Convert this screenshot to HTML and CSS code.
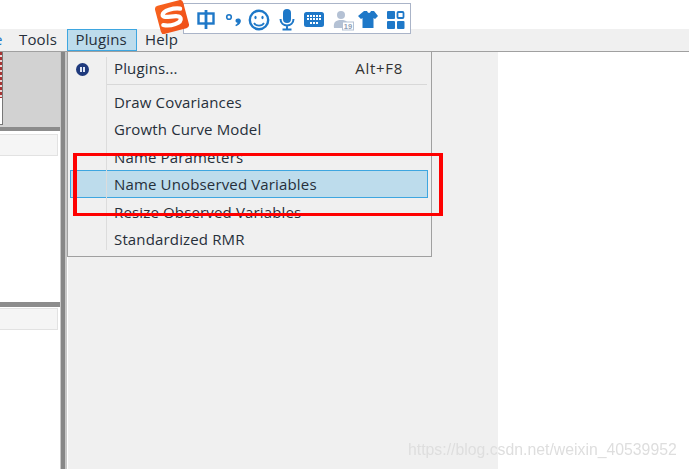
FILE: index.html
```html
<!DOCTYPE html>
<html lang="en">
<head>
<meta charset="utf-8">
<title>Plugins menu</title>
<link rel="stylesheet" href="styles.css">
</head>
<body>
<div class="app">
  <header class="topband"></header>
  <nav class="menubar">
    <span class="mitem edge">e</span>
    <span class="mitem tools">Tools</span>
    <span class="mitem plugins">Plugins</span>
    <span class="mitem help">Help</span>
  </nav>
  <div class="workspace">
    <aside class="left">
      <div class="preview"><div class="sheet"></div></div>
      <div class="pane-top"><div class="tabstrip"></div></div>
      <div class="hsplit"></div>
      <div class="pane-bottom"><div class="tabstrip"></div></div>
    </aside>
    <div class="vsplit"></div>
    <main class="canvas"></main>
    <div class="blank"></div>
  </div>
</div>

<div class="ime">
  <svg class="ime-logo" width="38" height="38" viewBox="0 0 38 38">
    <defs>
      <linearGradient id="sg" x1="0" y1="0" x2="1" y2="1">
        <stop offset="0" stop-color="#f8641e"/>
        <stop offset="1" stop-color="#ef4f1a"/>
      </linearGradient>
    </defs>
    <g transform="rotate(-15 19 18)">
      <rect x="4.500" y="3.500" width="29" height="29" rx="3.500" fill="url(#sg)"/>
      <path d="M29 12C23 9.500 12 9.500 10.500 13.500C9 18.500 27 16 27 21.500C27 26.500 15 27 8.500 23.500" fill="none" stroke="#fff" stroke-width="4.200" stroke-linecap="round"/>
    </g>
  </svg>
  <svg class="ime-icons" width="214" height="26" viewBox="0 0 214 26">
    <g fill="none" stroke="#1e78c8" stroke-width="2.400">
      <rect x="1.500" y="6.500" width="15" height="10"/>
      <path d="M9 3V22" stroke-width="2.800"/>
      <circle cx="32" cy="10" r="2.300" stroke-width="1.600"/>
      <circle cx="62" cy="13" r="9.200"/>
      <path d="M57 16C59 19.500 65 19.500 67 16" stroke-width="1.700"/>
      <path d="M83.500 12C83.500 20.500 96.500 20.500 96.500 12M90 18V22M85.500 22.500H94.500" stroke-width="2"/>
    </g>
    <path d="M41 11.500C43.500 11.500 44.500 13.500 43.500 15.500C42.800 17.300 41 18.500 39 19.200L38.300 18C39.500 17.400 40.300 16.700 40.500 15.800C39.300 15.600 38.500 14.800 38.500 13.700C38.500 12.400 39.500 11.500 41 11.500Z" fill="#1e78c8"/>
    <ellipse cx="58.500" cy="10.500" rx="1.100" ry="1.800" fill="#1e78c8"/>
    <ellipse cx="65.500" cy="10.500" rx="1.100" ry="1.800" fill="#1e78c8"/>
    <rect x="86" y="2" width="8" height="14" rx="4" fill="#1e78c8"/>
    <rect x="107" y="5" width="20" height="15" rx="2.500" fill="#1e78c8"/>
    <path d="M110 9H124M110 12H124M113 16H121" stroke="#fff" stroke-width="1.800" stroke-dasharray="2 1"/>
    <circle cx="144" cy="8" r="4" fill="#b4c1d4"/>
    <path d="M137 21C136 15 139 13 144 13C147 13 149 13.500 150 15V21Z" fill="#b4c1d4"/>
    <rect x="145.500" y="15" width="11" height="8" fill="#fff" stroke="#b4c1d4"/>
    <text class="badge" x="151" y="22">19</text>
    <path d="M167 4L170 4C171 6.500 173 6.500 174 4L177 4L181 9L178 12L176.500 11V21H165.500V11L164 12L161 9Z" fill="#1e78c8"/>
    <rect x="190" y="4" width="8" height="8" rx="1" fill="#1e78c8"/>
    <rect x="200.500" y="5" width="6" height="6" rx="1" fill="none" stroke="#1e78c8" stroke-width="1.800"/>
    <rect x="190" y="14" width="8" height="8" rx="1" fill="#1e78c8"/>
    <rect x="200" y="14" width="7.500" height="8" rx="1" fill="#1e78c8"/>
  </svg>
</div>

<div class="menu">
  <div class="rail">
    <span class="bullet"><i></i><i></i></span>
  </div>
  <div class="row first"><span>Plugins...</span><span class="key">Alt+F8</span></div>
  <div class="sep"></div>
  <div class="row"><span>Draw Covariances</span></div>
  <div class="row"><span>Growth Curve Model</span></div>
  <div class="row"><span>Name Parameters</span></div>
  <div class="row active"><span>Name Unobserved Variables</span></div>
  <div class="row"><span>Resize Observed Variables</span></div>
  <div class="row"><span>Standardized RMR</span></div>
</div>

<div class="annot"></div>
<div class="mark">https://blog.csdn.net/weixin_40539952</div>
</body>
</html>
```
FILE: styles.css
```css
* { box-sizing: border-box; }
html, body { margin: 0; height: 100%; overflow: hidden; background: #fff; }
body { font-family: "Open Sans", "Noto Sans", sans-serif; color: #262f3a; }
.app { display: flex; flex-direction: column; height: 469px; }
.topband { height: 29px; background: #fff; }
.menubar { height: 23px; background: #f0f0f0; border-bottom: 1px solid #a0a0a0; display: flex; font-size: 15px; letter-spacing: .15px; line-height: 21px; }
.mitem { display: block; height: 22px; }
.edge { width: 25px; margin-left: -6px; color: #1e78c8; }
.tools { width: 48px; }
.plugins { width: 70px; padding-left: 7.500px; background: #bddcec; border: 1px solid #3ea6e0; line-height: 19px; }
.help { padding-left: 8px; }
.workspace { flex: 1; display: flex; min-height: 0; }
.left { width: 60px; display: flex; flex-direction: column; background: #fff; }
.preview { height: 79px; background: #d2d2d2; border-bottom: 4px solid #8c8c8c; flex: none; }
.sheet { position: relative; width: 3px; height: 73px; background: #fff; border-right: 1px solid #777; border-bottom: 1px solid #777; }
.sheet::before { content: ""; position: absolute; left: 0; top: 0; width: 2px; height: 46px; background: repeating-linear-gradient(180deg, #a83232 0 3px, #e8d8d8 3px 5px); }
.pane-top { flex: none; height: 171px; padding-top: 3px; }
.tabstrip { height: 22px; margin-right: 2px; background: #f5f5f5; border: 1px solid #e2e2e2; border-left: 0; }
.hsplit { flex: none; height: 5px; background: #8c8c8c; }
.pane-bottom { flex: 1; padding-top: 1px; }
.vsplit { width: 8px; background: linear-gradient(90deg, #c8c8c8 0 1px, #878787 1px 5px, #c8c8c8 5px 7px, #fff 7px); }
.canvas { width: 430px; background: #f0f0f0; }
.blank { flex: 1; background: #fff; }
.ime { position: absolute; left: 153px; top: 0; width: 258px; height: 34px; }
.ime::before { content: ""; position: absolute; left: 30px; top: 3px; right: 0; bottom: 0; background: #fff; border: 1px solid #aab4c8; }
.ime-logo { position: absolute; left: 0; top: -1px; }
.ime-icons { position: absolute; left: 44px; top: 7px; }
.badge { font-family: "Liberation Sans", sans-serif; font-size: 7.500px; font-weight: 700; fill: #8f9fb5; text-anchor: middle; }
.menu { position: absolute; left: 67px; top: 52px; width: 365px; height: 205px; background: #f0f0f0; border: 1px solid #a0a0a0; border-top: 0; padding: 3px 3px 0 2px; font-size: 15px; letter-spacing: .15px; }
.rail { position: absolute; left: 38px; top: 5px; bottom: 6px; width: 1px; background: #dcdcdc; }
.bullet { position: absolute; left: -30px; top: 6px; width: 13px; height: 13px; border-radius: 50%; background: #1f3a7d; display: flex; gap: 1px; align-items: center; justify-content: center; }
.bullet i { width: 2px; height: 5px; background: #dfe6f5; }
.row { height: 27.400px; display: flex; align-items: center; justify-content: space-between; padding: 0 25px 0 44px; line-height: 20px; }
.row.first { height: 29px; margin-top: -2px; }
.key { color: #333; letter-spacing: .7px; }
.sep { height: 1px; margin: 2px 1px 3.300px 37px; background: #d8d8d8; }
.active { background: #bddcec; border: 1px solid #3ea6e0; padding-left: 43px; }
.annot { position: absolute; left: 73px; top: 153px; width: 370px; height: 63px; border: solid #fe0000; border-width: 3px 4px; }
.mark { position: absolute; left: 408px; top: 441px; font-family: "Liberation Sans", sans-serif; font-size: 15.800px; color: #dedede; filter: blur(.4px); }
```
